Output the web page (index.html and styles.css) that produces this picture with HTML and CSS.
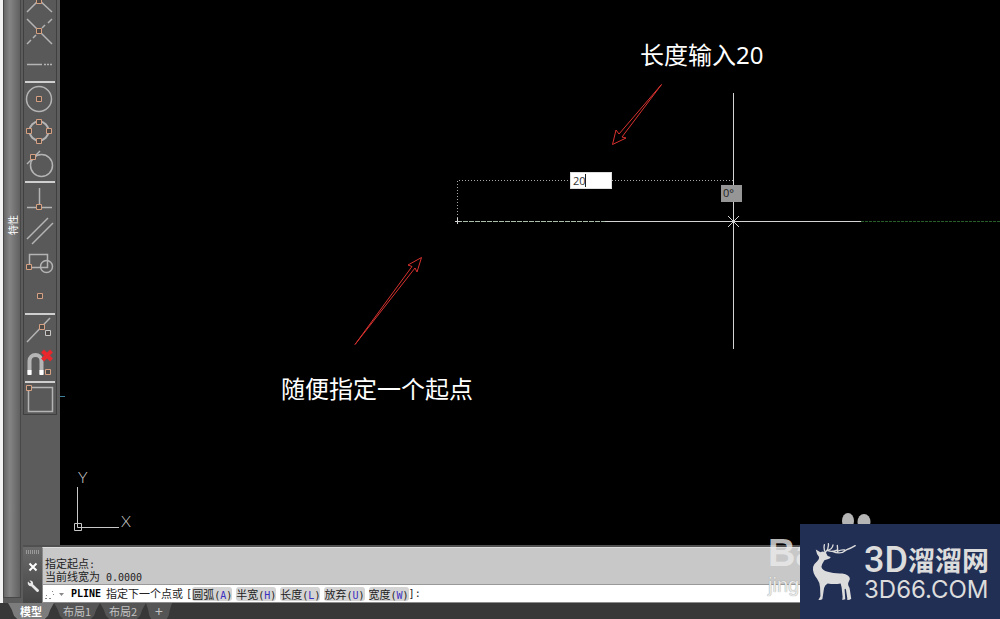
FILE: index.html
```html
<!DOCTYPE html>
<html lang="zh-CN">
<head>
<meta charset="utf-8">
<title>PLINE</title>
<link rel="stylesheet" href="styles.css">
</head>
<body>
<div class="app">
  <div class="workspace">
    <aside class="palette"><span class="palette-title">特性</span></aside>
    <div class="main">
      <div class="drawing">
        <nav class="toolbar" aria-label="对象捕捉">
          <div class="tools">
            <button class="tool" type="button" aria-label="交点"><svg viewBox="0 0 32 32"><path class="ln" d="M3 28 15 16 28 28"/><path class="sq" d="M12.500 13.500h5v6h-5z"/></svg></button>
            <button class="tool" type="button" aria-label="外观交点"><svg viewBox="0 0 32 32"><path class="ln" d="M3 3 28 28M3 28l4-4M9 22l3-3M18 12l3-3M24 7l4-4"/><path class="sq" d="M12.500 12.500h5v5h-5z"/></svg></button>
            <button class="tool" type="button" aria-label="延长线"><svg viewBox="0 0 32 32"><path class="ln" d="M3 16.500H18M20 16.500h2M23 16.500h2M26 16.500h2"/></svg></button>
            <hr class="rule">
            <button class="tool" type="button" aria-label="圆心"><svg viewBox="0 0 32 32"><circle class="ln" cx="15" cy="15" r="12.500"/><path class="sq" d="M12.500 12.500h5v5h-5z"/></svg></button>
            <button class="tool" type="button" aria-label="象限点"><svg viewBox="0 0 32 32"><circle class="ln thick" cx="15" cy="15" r="9.500"/><path class="sq" d="M12.500 3.500h5v5h-5zM12.500 22.500h5v5h-5zM2.500 12.500h5v5h-5zM22.500 12.500h5v5h-5z"/></svg></button>
            <button class="tool" type="button" aria-label="切点"><svg viewBox="0 0 32 32"><circle class="ln" cx="17.500" cy="17.500" r="11"/><path class="ln" d="M3 16 16 3"/><path class="sq" d="M6.500 6.500h5v5h-5z"/></svg></button>
            <hr class="rule">
            <button class="tool" type="button" aria-label="垂足"><svg viewBox="0 0 32 32"><path class="ln" d="M15.500 4V23M3 23.500H28"/><path class="sq" d="M12.500 20.500h5v5h-5z"/></svg></button>
            <button class="tool" type="button" aria-label="平行线"><svg viewBox="0 0 32 32"><path class="ln" d="M3 23 24 2M8 28 29 7"/></svg></button>
            <button class="tool" type="button" aria-label="插入点"><svg viewBox="0 0 32 32"><path class="ln" d="M5.500 6.500h18v13h-18z"/><circle class="ln" cx="22.500" cy="18.500" r="6"/><path class="sq" d="M2.500 16.500h5v5h-5z"/></svg></button>
            <button class="tool" type="button" aria-label="节点"><svg viewBox="0 0 32 32"><path class="sq" d="M13.500 13.500h5v5h-5z"/></svg></button>
            <hr class="rule">
            <button class="tool" type="button" aria-label="最近点"><svg viewBox="0 0 32 32"><path class="ln" d="M3 26 26 2"/><path class="sq" d="M15.500 8.500h5v5h-5z"/><path class="sq plain" d="M21.500 14.500h5v5h-5z"/></svg></button>
            <button class="tool" type="button" aria-label="无捕捉"><svg viewBox="0 0 32 32"><path class="magnet" d="M5.500 26V13a6 6 0 0 1 12 0V26"/><path class="poles" d="M5.500 22v5M17.500 22v5"/><path class="cross" d="M18.500 3l9 9M27.500 3l-9 9"/><path class="sq" d="M21.500 21.500h5v5h-5z"/></svg></button>
            <hr class="rule">
            <button class="tool" type="button" aria-label="捕捉设置"><svg viewBox="0 0 32 32"><path class="ln" d="M4.500 3.500h24v24h-24z"/><path class="sq" d="M2.500 1.500h5v5h-5z"/></svg></button>
          </div>
        </nav>
        <main class="canvas">
          <svg class="scene" width="940" height="548" viewBox="60 0 940 548">
            <path class="track" d="M861 221.500H1000"/>
            <path class="rubber" d="M457 221.500H605"/>
            <path class="dots" d="M457.500 221V180.500H733"/>
            <path class="hair" d="M733.500 93V349M605 221.500H861M728 216l11 11M739 216l-11 11M457.500 218v6M455 221.500h5"/>
            <path class="arrow" d="M612.500 144.500 616 130l3 4L661.500 84.500 622 137l4 1z"/>
            <path class="arrow" d="M421.500 257.500 408 265l4 1.500L355 344.500 415 268l2 4z"/>
            <path class="ucs" d="M77.500 487V527.500H119M74.500 523.500h7v7h-7z"/>
            <text class="axis" x="78" y="483">Y</text>
            <text class="axis" x="121" y="527">X</text>
            <path class="tick" d="M60 396.500h5"/>
          </svg>
          <p class="note note-length">长度输入20</p>
          <p class="note note-start">随便指定一个起点</p>
          <input class="length" aria-label="长度" value="20"><span class="caret"></span>
          <output class="angle">0°</output>
        </main>
      </div>
      <section class="command" aria-label="命令行">
        <div class="grip">
          <span class="grip-dots"></span>
          <button type="button" aria-label="关闭"><svg viewBox="0 0 12 12"><path class="close" d="M2.500 2.500l7 7M9.500 2.500l-7 7"/></svg></button>
          <button type="button" aria-label="自定义"><svg viewBox="0 0 12 12"><path class="wrench" d="M1 1.500 3 3.500 4 2.500 2.500.5C5 0 6.500 2 6 4.200L11.500 9.500a1.300 1.300 0 0 1-2 2L4.200 6.200C2 6.500 0 4.500 1 1.500z"/></svg></button>
        </div>
        <div class="console">
          <div class="history"><p>指定起点<i>:</i></p><p>当前线宽为<i> 0.0000</i></p></div>
          <div class="prompt">
            <svg class="recent" viewBox="0 0 22 12"><path d="M2 10.500h2M6 10.500h2M9 3.500h1M10 6.500h1M3 7.500h1" stroke="#888"/><path d="M16 5h5l-2.500 3z" fill="#888"/></svg>
            <b>PLINE</b><span class="ask">指定下一个点或</span><i>[</i>
            <span class="options"><button type="button">圆弧<i>(<em>A</em>)</i></button><button type="button">半宽<i>(<em>H</em>)</i></button><button type="button">长度<i>(<em>L</em>)</i></button><button type="button">放弃<i>(<em>U</em>)</i></button><button type="button">宽度<i>(<em>W</em>)</i></button></span><i>]:</i>
          </div>
        </div>
      </section>
    </div>
  </div>
  <nav class="tabs" aria-label="布局">
    <button class="tab active" type="button">模型</button><button class="tab" type="button">布局1</button><button class="tab" type="button">布局2</button><button class="tab add" type="button" aria-label="新建布局">+</button>
  </nav>
  <div class="watermark">
    <svg class="paws" viewBox="0 0 32 18"><ellipse cx="7" cy="8" rx="6" ry="8"/><ellipse cx="23" cy="9" rx="6.500" ry="8"/></svg>
    <span class="wm-name">Ba</span>
    <span class="wm-site">jing</span>
  </div>
  <div class="brand">
    <svg class="deer" viewBox="215 125 132 178">
      <path class="deer-body" d="M226 148 240 156Q249 150 257 158L262 167 271 170Q270 175 264 176L252 180Q245 190 243 200 245 211 262 215 280 221 306 220 328 223 329 237L325 246Q321 254 328 264L333 296Q330 300 321 300L321 294 317 268Q314 264 313 268L315 298 306 300 307 290 304 262 301 250Q282 253 262 250 254 253 251 264L246 297Q243 301 234 300L240 289 239 262Q238 247 230 236 215 218 218 200 221 190 231 182 237 176 236 170 228 162 226 148z"/>
      <path class="antler" d="M255 157Q249 147 252 133M256 155Q266 144 264 130M260 150Q276 148 278 134M262 151Q277 156 292 149L291 135M276 153Q302 164 318 149 332 144 345 136M291 153Q304 147 313 149"/>
    </svg>
    <div class="brand-text"><div class="brand-top"><span>3D</span><span class="brand-cn">溜溜网</span></div><div class="brand-url">3D66.COM</div></div>
  </div>
</div>
</body>
</html>
```
FILE: styles.css
```css
* { box-sizing: border-box; }
body { margin: 0; background: #383838; font-family: "Liberation Sans", "Noto Sans CJK SC", sans-serif; }
p { margin: 0; }
button { border: 0; padding: 0; background: none; font: inherit; color: inherit; }
i, em { font-style: normal; }

.app { position: relative; display: flex; flex-direction: column; height: 100vh; overflow: hidden; }
.workspace { flex: 1; display: flex; min-height: 0; background: #5c5c5c; border-left: 3px solid #f4f4f4; }

.palette {
  width: 18px; display: flex; align-items: center; justify-content: center;
  margin-bottom: 5px; padding-bottom: 148px; padding-left: 3px;
  border: 1px solid #484848; border-top: 0;
  background: linear-gradient(90deg, #686868, #858585 35%, #606060);
}
.palette-title { writing-mode: vertical-rl; text-orientation: sideways; transform: rotate(180deg); color: #fff; font-size: 10px; line-height: 12px; }

.main { flex: 1; display: flex; flex-direction: column; min-width: 0; padding-left: 2px; }
.drawing { flex: 1; display: flex; min-height: 0; }
.toolbar { width: 37px; overflow: hidden; }
.tools { width: 34px; margin-top: -16px; border: 1px solid #404040; border-top: 0; background: #595959; }
.tool { display: block; width: 32px; height: 32px; }
.tool svg { display: block; width: 32px; height: 32px; }
.tool:last-child { height: 30px; }
.rule { height: 2px; margin: 1px; border: 0; background: #cfcfcf; }
.ln { fill: none; stroke: #b4b4b4; stroke-width: 1.5; }
.thick { stroke-width: 2; }
.sq { fill: #4e4a48; stroke: #d6a183; }
.plain { stroke: #c8c8c8; }
.magnet { fill: none; stroke: #b5b5b5; stroke-width: 4; }
.poles { stroke: #fff; stroke-width: 4; }
.cross { stroke: #e8282d; stroke-width: 4; }

.canvas { position: relative; flex: 1; background: #000; overflow: hidden; }
.scene { position: absolute; left: 0; top: 0; fill: none; }
.track { stroke: #285c28; stroke-dasharray: 3 1; }
.rubber { stroke: #a9bfa9; stroke-dasharray: 5 1; }
.dots { stroke: #a8a8a8; stroke-dasharray: 1 2; }
.hair { stroke: #d4d4d4; }
.arrow { stroke: #d8322f; stroke-width: 1; }
.ucs { stroke: #c8c8c8; }
.tick { stroke: #3f7f9a; }
.axis { fill: #d0d0d0; font: 300 16px Lato, sans-serif; }
.note { position: absolute; color: #fff; font: 24px/32px "Noto Sans", "Noto Sans CJK SC", sans-serif; white-space: nowrap; }
.note-length { left: 580px; top: 39px; }
.note-start { left: 221px; top: 373px; }
.length { position: absolute; left: 510px; top: 172px; width: 42px; height: 17px; border: 1px solid #ddd; padding: 0 2px; background: #fff; color: #333; font: 11px "Open Sans", sans-serif; }
.caret { position: absolute; left: 525px; top: 174px; width: 1px; height: 13px; background: #222; }
.angle { position: absolute; left: 661px; top: 185px; width: 21px; height: 17px; padding-left: 2px; background: #969696; color: #222; font: 11px/16px "Open Sans", sans-serif; }

.command { display: flex; height: 58px; border-top: 2px solid #505050; color: #222; font: 11px/13px "Noto Sans CJK SC", sans-serif; }
.grip { width: 19px; display: flex; flex-direction: column; align-items: center; gap: 7px; padding-top: 3px; background: linear-gradient(#6a6a6a, #454545); color: #fff; }
.grip-dots { width: 14px; height: 4px; background: repeating-linear-gradient(90deg, #999 0 1px, transparent 1px 2px); }
.grip button, .grip svg { display: block; width: 12px; height: 12px; }
.close { stroke: #fff; stroke-width: 2; }
.wrench { fill: #e8e8e8; }
.command i { font-family: "DejaVu Sans Mono", monospace; font-size: 10px; line-height: 1; white-space: pre; }
.console { flex: 1; display: flex; flex-direction: column; border: 1px solid #8c8c8c; border-right: 0; border-top-color: #ddd; }
.history { flex: 1; display: flex; flex-direction: column; justify-content: flex-end; padding: 0 2px 1px; background: #c8c8c8; }
.history p { height: 13px; }
.prompt { display: flex; align-items: center; height: 18px; border-top: 1px solid #999; background: #fff; }
.recent { width: 22px; height: 12px; margin-right: 6px; }
.prompt b { font: bold 10px "DejaVu Sans Mono", monospace; color: #000; }
.ask { margin-left: 5px; }
.prompt > i { margin: 0 0 0 3px; }
.prompt > .options + i { margin-left: 0; }
.options { display: flex; gap: 4px; }
.options button { background: #d4d4d4; border-radius: 3px; line-height: 14px; }
.options em { color: #3a2fc0; }

.tabs { display: flex; height: 16px; padding-left: 8px; background: #383838; color: #c4c4c4; font: 11px/15px "Noto Sans CJK SC", sans-serif; }
.tab { width: 46px; background: #555; clip-path: polygon(0 0, 100% 0, 92% 40%, 87% 80%, 80% 100%, 20% 100%, 13% 80%, 8% 40%); }
.active { background: #7c7c7c; color: #fff; font-weight: 700; }
.tab:first-child { width: 46px; }
.add { width: 26px; font-size: 14px; }

.watermark { position: absolute; right: 122px; bottom: 20px; width: 110px; height: 86px; color: rgba(235, 235, 235, .8); }
.paws { position: absolute; left: 73px; top: 0; width: 32px; height: 18px; fill: #b5b5b5; }
.wm-name { position: absolute; left: 0; top: 20px; font: bold 38px/40px "Liberation Sans", sans-serif; }
.wm-site { position: absolute; left: 0; top: 60px; font: 20px/24px "Liberation Sans", sans-serif; color: #e8e8e8; text-shadow: 0 0 1px #888; }

.brand { position: absolute; right: 0; bottom: 0; width: 200px; height: 95px; display: flex; gap: 8px; padding: 18px 0 0 12px; background: #222f55; color: #dcdcdc; }
.deer { width: 44px; height: 59px; }
.deer-body { fill: #dcdcdc; }
.antler { fill: none; stroke: #dcdcdc; stroke-width: 4; stroke-linecap: round; }
.brand-top { display: flex; align-items: center; height: 36px; font: 500 36px/36px Roboto, sans-serif; }
.brand-cn { font: 700 27px/36px "Noto Sans CJK SC", sans-serif; }
.brand-url { font: 24px/24px Inter, sans-serif; }
```
